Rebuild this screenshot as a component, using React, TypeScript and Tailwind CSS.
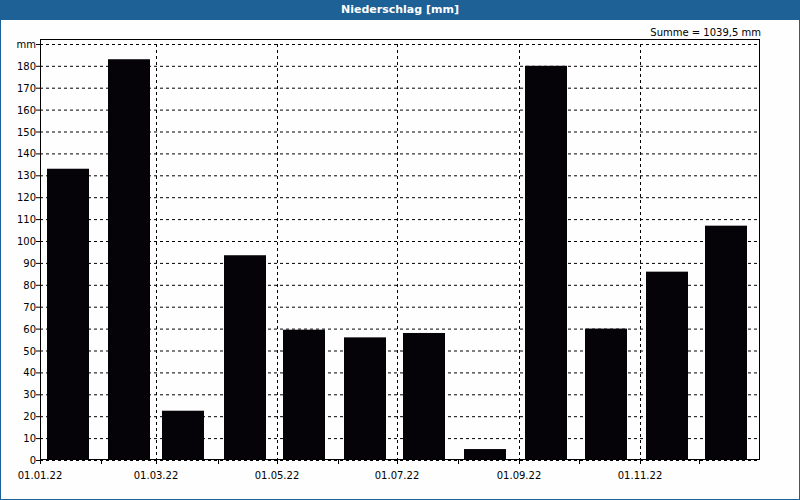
const BARS = [
  { x: 47, v: 133 }, { x: 108, v: 183 }, { x: 162, v: 22.5 }, { x: 224, v: 93.5 },
  { x: 283, v: 59.5 }, { x: 344, v: 56 }, { x: 403, v: 58 }, { x: 464, v: 5 },
  { x: 525, v: 180 }, { x: 585, v: 60 }, { x: 646, v: 86 }, { x: 705, v: 107 },
]

const TOP = 44
const BOTTOM = 460
const LEFT = 40
const RIGHT = 760
const yOf = (v: number) => BOTTOM - v * 2.19

const MONTH_DAYS = [0, 31, 59, 90, 120, 151, 181, 212, 243, 273, 304, 334]
const xOfDay = (d: number) => LEFT + (d / 365) * (RIGHT - LEFT)

export default function App() {
  const font = { fontFamily: '"DejaVu Sans", Verdana, sans-serif' }
  return (
    <div className="w-[800px] h-[500px] bg-[#1d6196] flex flex-col" style={font}>
      <div className="h-[20px] flex items-center justify-center text-white text-[11px] font-bold">
        Niederschlag [mm]
      </div>
      <div className="flex-1 mx-px mb-px bg-[#fdfefd]">
        <svg width="798" height="479" viewBox="1 20 798 479" className="block">
          {/* horizontal grid */}
          {Array.from({ length: 19 }, (_, i) => i * 10).map((v) => (
            <line key={v} x1={LEFT} x2={RIGHT} y1={yOf(v) + 0.5} y2={yOf(v) + 0.5} stroke="#000" strokeDasharray="3 3" />
          ))}
          <line x1={LEFT} x2={RIGHT} y1={TOP + 0.5} y2={TOP + 0.5} stroke="#000" strokeDasharray="3 3" />
          {/* vertical grid */}
          {[2, 4, 6, 8, 10].map((m) => (
            <line key={m} x1={Math.round(xOfDay(MONTH_DAYS[m])) + 0.5} x2={Math.round(xOfDay(MONTH_DAYS[m])) + 0.5} y1={TOP} y2={BOTTOM} stroke="#000" strokeDasharray="3 3" />
          ))}
          {BARS.map((b, i) => (
            <rect key={i} x={b.x} y={yOf(b.v)} width={42} height={BOTTOM - yOf(b.v)} fill="#050307" />
          ))}
          {/* frame */}
          <rect x={LEFT + 0.5} y={TOP - 4.5} width={RIGHT - LEFT - 1} height={BOTTOM - TOP + 4} fill="none" stroke="#000" />
          {/* ticks */}
          {Array.from({ length: 19 }, (_, i) => i * 10).map((v) => (
            <line key={v} x1={LEFT - 4} x2={LEFT} y1={yOf(v) + 0.5} y2={yOf(v) + 0.5} stroke="#000" />
          ))}
          <line x1={LEFT - 4} x2={LEFT} y1={TOP + 0.5} y2={TOP + 0.5} stroke="#000" />
          {MONTH_DAYS.map((d) => (
            <line key={d} x1={Math.round(xOfDay(d)) + 0.5} x2={Math.round(xOfDay(d)) + 0.5} y1={BOTTOM} y2={BOTTOM + 4} stroke="#000" />
          ))}
          <g fontSize="10" fill="#000">
            {Array.from({ length: 19 }, (_, i) => i * 10).map((v) => (
              <text key={v} x={36} y={yOf(v) + 4} textAnchor="end">{v}</text>
            ))}
            <text x={36} y={TOP + 4} textAnchor="end">mm</text>
            {[0, 2, 4, 6, 8, 10].map((m) => (
              <text key={m} x={Math.round(xOfDay(MONTH_DAYS[m]))} y={479} textAnchor="middle">
                {`01.${String(m + 1).padStart(2, '0')}.22`}
              </text>
            ))}
            <text x={761} y={36} textAnchor="end">Summe = 1039,5 mm</text>
          </g>
        </svg>
      </div>
    </div>
  )
}
